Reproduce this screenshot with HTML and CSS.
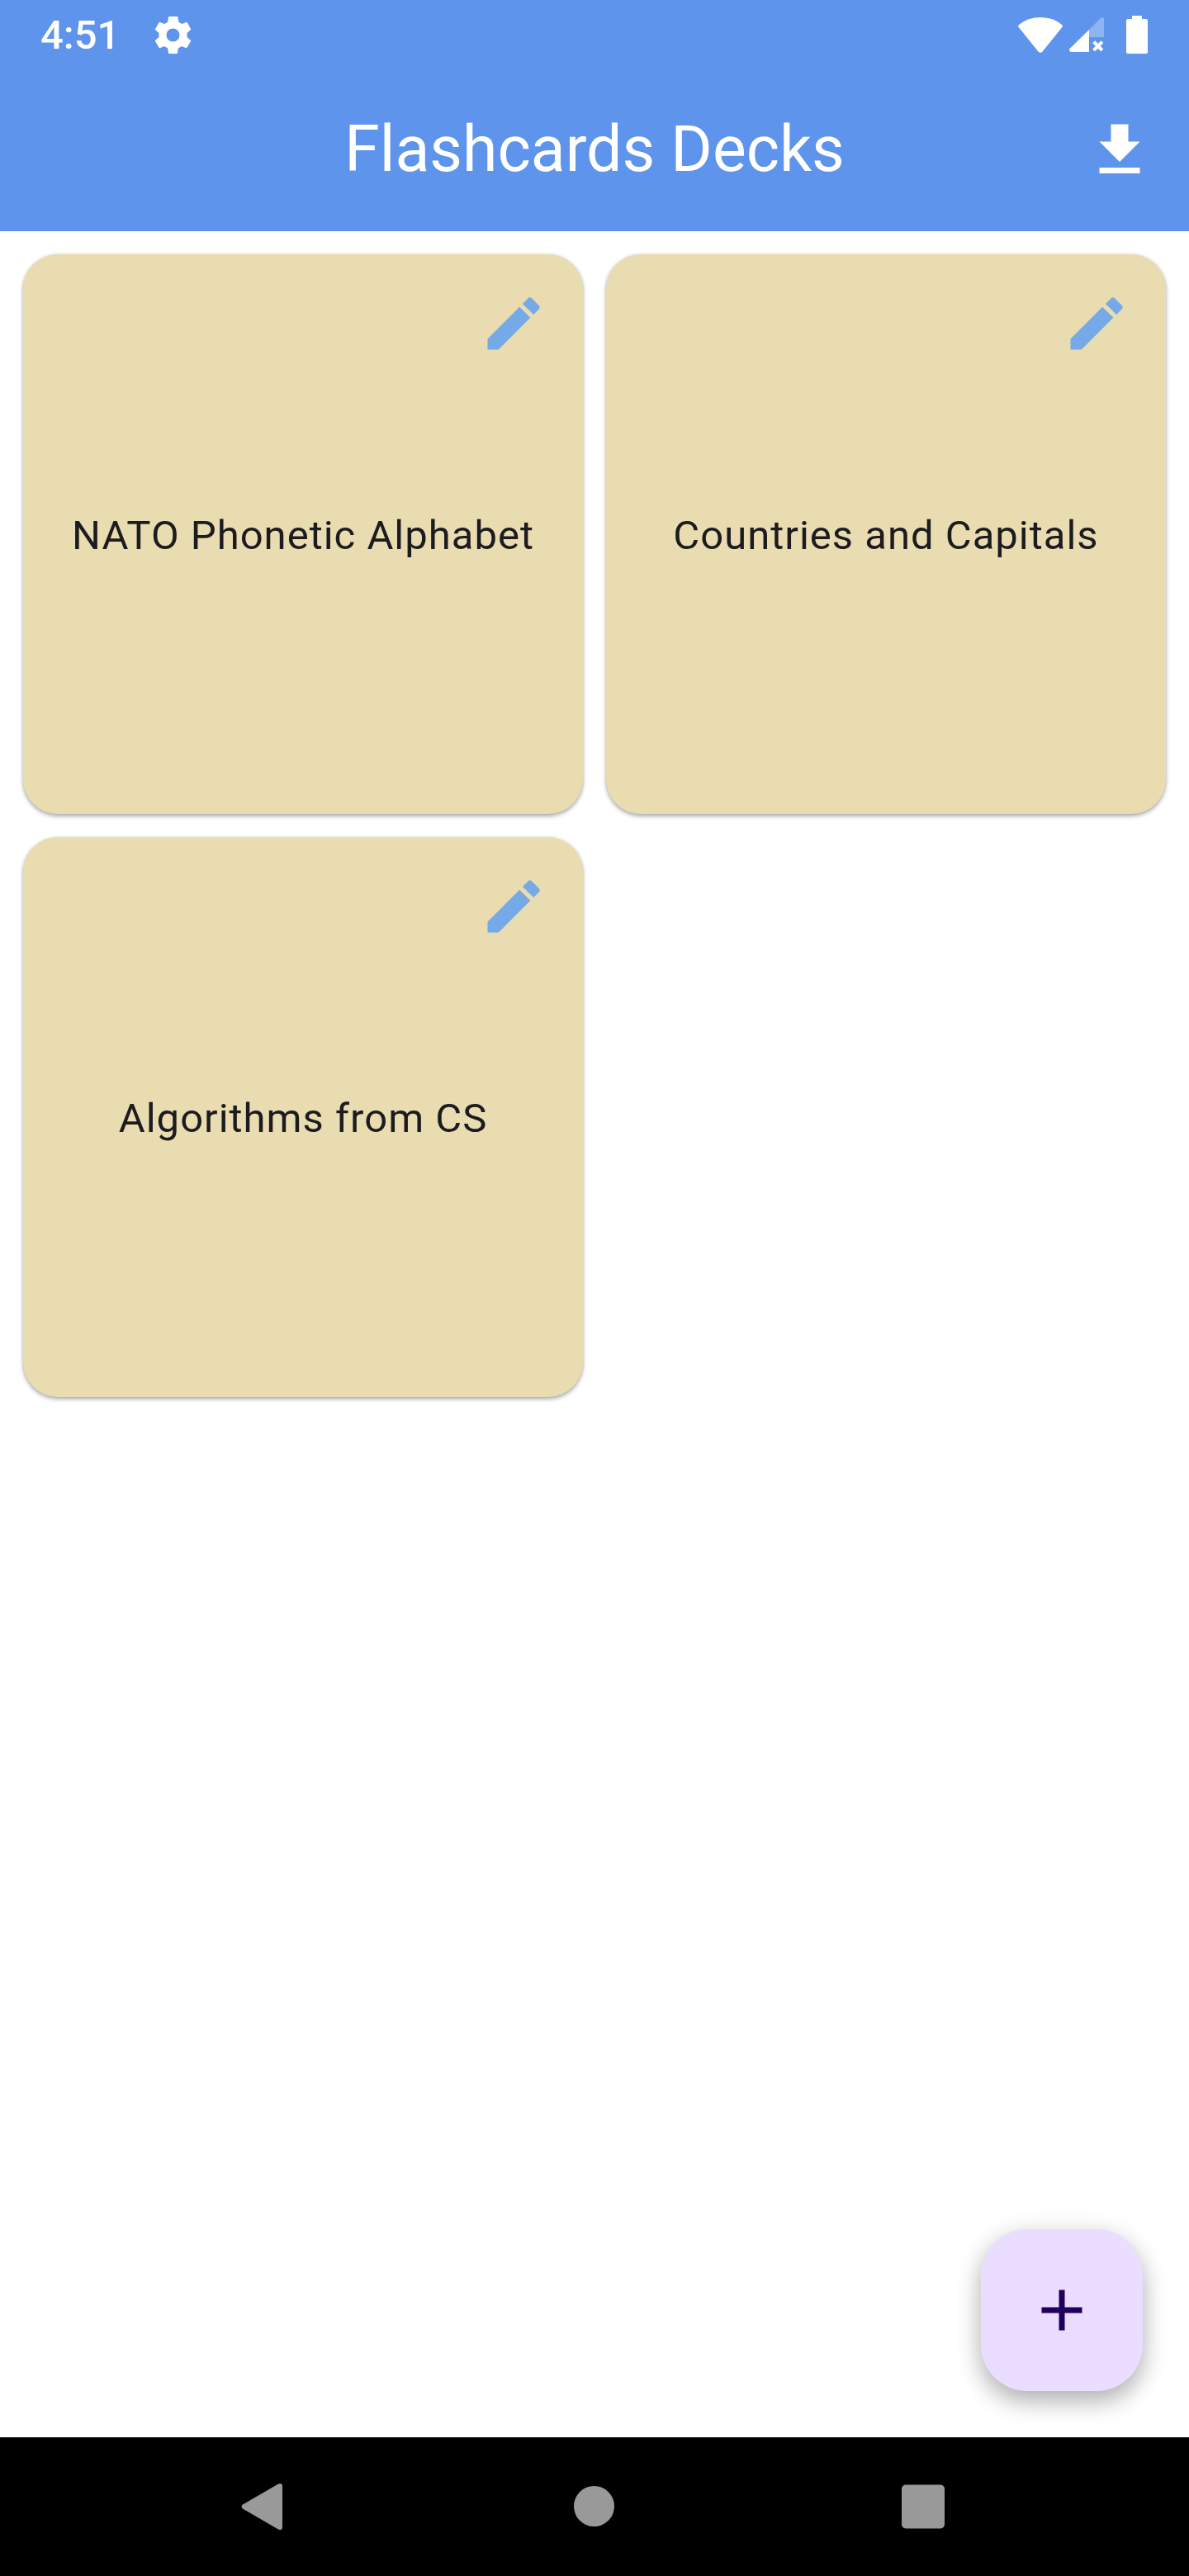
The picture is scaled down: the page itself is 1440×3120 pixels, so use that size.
FILE: index.html
```html
<!DOCTYPE html>
<html lang="en">
<head>
<meta charset="utf-8">
<meta name="viewport" content="width=device-width, initial-scale=1">
<title>Flashcards Decks</title>
<link rel="stylesheet" href="styles.css">
</head>
<body>
<header class="header">
  <div class="status">
    <time class="clock">4:51</time>
    <svg class="gear" viewBox="0 0 43 45" aria-hidden="true"><path fill-rule="evenodd" d="M16.500 0h10q1 0 1 1l1 6q2 1 4 2l5-2q1-.5 1.500.5l4 7.500q.5 1-.5 1.500l-4 3.500v5l4 3.500q1 .5.500 1.500l-4.500 7.500q-.5 1-1.500.5l-5-2q-2 1.300-4 2l-1 6q0 1-1 1h-9q-1 0-1-1l-1-6q-2-.7-4-2l-5 2q-1 .5-1.500-.5l-4.500-7.500q-.5-1 .5-1.500l4-3.500v-5l-4-3.500q-1-.5-.5-1.500l4.500-7.500q.5-1 1.500-.5l5 2q2-1 4-2l1-6q0-1 .5-1zM21.500 14.500a8 8 0 1 0 0 16a8 8 0 1 0 0-16z"/></svg>
    <svg class="wifi" viewBox="0 0 54 43" aria-hidden="true"><path d="M1 9Q12 0 27 0T53 9q1.500 1.500.3 3L29.500 41.500q-2.500 2.500-5 0L.7 12Q-.5 10.500 1 9z"/></svg>
    <svg class="signal" viewBox="0 0 42 42" aria-hidden="true"><path opacity=".3" d="M24 15L38 1q1.500-1.500 3-1q1 .5 1 2v22H24z"/><path d="M24 15v27H2q-3-1-1.500-4z"/><path class="cross" d="M31 31l7.500 7.500M38.500 31L31 38.500"/></svg>
    <svg class="battery" viewBox="0 0 26 46" aria-hidden="true"><path d="M7 0h12v4h5q2 0 2 2v38q0 2-2 2H2q-2 0-2-2V6q0-2 2-2h5z"/></svg>
  </div>
  <div class="appbar">
    <h1 class="title">Flashcards Decks</h1>
    <button class="icon-button" type="button" aria-label="Download deck"><svg class="icon" viewBox="0 0 24 24" aria-hidden="true"><path d="M19 9h-4V3H9v6H5l7 7 7-7zM5 18v2h14v-2H5z"/></svg></button>
  </div>
</header>
<main class="content">
  <section class="decks" aria-label="Decks">
    <article class="deck">
      <h2 class="deck-name">NATO Phonetic Alphabet</h2>
      <button class="icon-button edit" type="button" aria-label="Edit NATO Phonetic Alphabet"><svg class="icon" viewBox="0 0 24 24" aria-hidden="true"><path d="M3 17.250V21h3.750L17.810 9.940l-3.750-3.750L3 17.250zM20.710 7.040a1 1 0 0 0 0-1.410l-2.340-2.340a1 1 0 0 0-1.410 0l-1.830 1.830 3.750 3.750 1.830-1.830z"/></svg></button>
    </article>
    <article class="deck">
      <h2 class="deck-name">Countries and Capitals</h2>
      <button class="icon-button edit" type="button" aria-label="Edit Countries and Capitals"><svg class="icon" viewBox="0 0 24 24" aria-hidden="true"><path d="M3 17.250V21h3.750L17.810 9.940l-3.750-3.750L3 17.250zM20.710 7.040a1 1 0 0 0 0-1.410l-2.340-2.340a1 1 0 0 0-1.410 0l-1.830 1.830 3.750 3.750 1.830-1.830z"/></svg></button>
    </article>
    <article class="deck">
      <h2 class="deck-name">Algorithms from CS</h2>
      <button class="icon-button edit" type="button" aria-label="Edit Algorithms from CS"><svg class="icon" viewBox="0 0 24 24" aria-hidden="true"><path d="M3 17.250V21h3.750L17.810 9.940l-3.750-3.750L3 17.250zM20.710 7.040a1 1 0 0 0 0-1.410l-2.340-2.340a1 1 0 0 0-1.410 0l-1.830 1.830 3.750 3.750 1.830-1.830z"/></svg></button>
    </article>
  </section>
  <button class="fab" type="button" aria-label="Add deck"><svg class="icon" viewBox="0 0 24 24" aria-hidden="true"><path d="M19 13h-6v6h-2v-6H5v-2h6V5h2v6h6v2z"/></svg></button>
</main>
<nav class="navbar" aria-label="System">
  <button class="nav-button" type="button" aria-label="Back"><svg class="nav-icon" viewBox="0 0 60 60" aria-hidden="true"><path d="M2 27.500L45 2.500q5-2 5 3v49q0 5-5 3L2 32.500q-3-2.500 0-5z"/></svg></button>
  <button class="nav-button" type="button" aria-label="Home"><svg class="nav-icon" viewBox="0 0 60 60" aria-hidden="true"><circle cx="29.500" cy="29.500" r="24.500"/></svg></button>
  <button class="nav-button" type="button" aria-label="Recent apps"><svg class="nav-icon" viewBox="0 0 60 60" aria-hidden="true"><rect x="4" y="3.500" width="52" height="53" rx="5"/></svg></button>
</nav>
</body>
</html>
```
FILE: styles.css
```css
* {
  box-sizing: border-box;
}

body {
  display: flex;
  flex-direction: column;
  min-height: 100vh;
  margin: 0;
  background: #fff;
  color: #1c1b1f;
  font-family: Roboto, "Liberation Sans", sans-serif;
}

button {
  display: grid;
  place-items: center;
  padding: 0;
  border: 0;
  background: none;
  color: inherit;
  cursor: pointer;
}

svg {
  display: block;
  fill: currentColor;
}

.header {
  background: #5e94ec;
  color: #fff;
}

.status {
  display: flex;
  align-items: center;
  height: 84px;
  padding: 0 50px 0 49px;
}

.clock {
  padding-top: 2px;
  font-size: 49px;
  font-weight: 500;
  line-height: 84px;
}

.gear {
  width: 43px;
  height: 45px;
  margin-left: 43px;
}

.wifi {
  width: 54px;
  height: 43px;
  margin-left: auto;
}

.signal {
  width: 42px;
  height: 42px;
  margin: 0 27px 0 8px;
}

.cross {
  fill: none;
  stroke: currentColor;
  stroke-width: 4;
  stroke-linecap: square;
}

.battery {
  width: 26px;
  height: 46px;
}

.appbar {
  display: grid;
  grid-template-columns: 1fr auto 1fr;
  align-items: center;
  height: 196px;
}

.title {
  grid-column: 2;
  margin: 0;
  padding-bottom: 2px;
  font-size: 77px;
  font-weight: 400;
  line-height: 98px;
}

.icon-button {
  justify-self: end;
  width: 168px;
  height: 168px;
}

.icon {
  width: 84px;
  height: 84px;
}

.content {
  position: relative;
  flex: 1;
  padding: 28px;
}

.decks {
  display: grid;
  grid-template-columns: 1fr 1fr;
  gap: 28px;
}

.deck {
  position: relative;
  display: grid;
  place-items: center;
  aspect-ratio: 1;
  border-radius: 42px;
  background: #e9dcb0;
  box-shadow: 0 3px 5px rgba(0, 0, 0, 0.28), 0 0 4px rgba(0, 0, 0, 0.12);
}

.deck-name {
  margin: 0;
  padding-top: 4px;
  font-size: 49px;
  font-weight: 400;
  line-height: 70px;
  letter-spacing: 1px;
}

.edit {
  position: absolute;
  top: 0;
  right: 0;
  color: #75a9e8;
}

.fab {
  position: absolute;
  right: 56px;
  bottom: 56px;
  width: 196px;
  height: 196px;
  border-radius: 56px;
  background: #eaddff;
  color: #21005d;
  box-shadow: 0 14px 28px rgba(0, 0, 0, 0.24), 0 4px 32px rgba(0, 0, 0, 0.1);
}

.navbar {
  display: grid;
  grid-template-columns: repeat(3, 1fr);
  height: 168px;
  padding: 0 123px;
  background: #000;
  color: #999;
}

.nav-icon {
  width: 60px;
  height: 60px;
}
```
